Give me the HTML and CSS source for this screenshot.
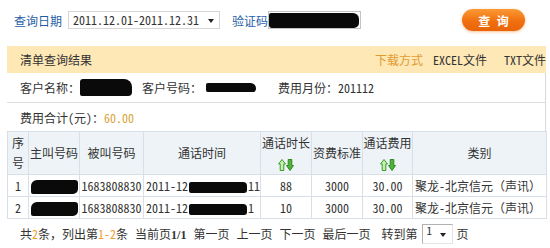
FILE: index.html
```html
<!DOCTYPE html>
<html>
    <head>
        <meta charset="utf-8">
        <link rel="stylesheet" href="styles.css">
    </head>
    <body>
        <div class="search">
            <span class="label">查询日期</span>
            <div class="select date">2011.12.01-2011.12.31<span class="caret"></span></div>
            <span class="label code-label">验证码</span>
            <div class="code"><span class="ink ink-code"></span></div>
            <button class="btn">查 询</button>
        </div>

        <div class="panel">
            <div class="panel-head">
                <span>清单查询结果</span>
                <span class="downloads">
                    <span class="dl-title">下载方式</span>
                    <a class="dl">EXCEL文件</a>
                    <a class="dl dl-txt">TXT文件</a>
                </span>
            </div>

            <div class="line info">
                <span>客户名称：</span><span class="ink ink-name"></span>
                <span class="gap">客户号码：</span><span class="ink ink-num"></span>
                <span class="month">费用月份：201112</span>
            </div>

            <div class="line total">
                费用合计(元)：<span class="money">60.00</span>
            </div>

            <table>
                <colgroup>
                    <col style="width:21px">
                    <col style="width:51px">
                    <col style="width:64px">
                    <col style="width:117px">
                    <col style="width:51px">
                    <col style="width:51px">
                    <col style="width:50px">
                    <col style="width:134px">
                </colgroup>
                <tr>
                    <th>序<br>号</th>
                    <th>主叫号码</th>
                    <th>被叫号码</th>
                    <th>通话时间</th>
                    <th>通话时长<br><svg class="sort" width="16" height="12" viewBox="0 0 16 12"><polygon points="4,0.5 7.5,5 5.8,5 5.8,11.5 2.2,11.5 2.2,5 0.5,5" fill="#c6eeb0" stroke="#3a9a2a"/><polygon points="10.2,0.5 13.8,0.5 13.8,6.5 15.5,6.5 12,11.5 8.5,6.5 10.2,6.5" fill="#4fb23a" stroke="#2f8a22"/></svg></th>
                    <th>资费标准</th>
                    <th>通话费用<br><svg class="sort" width="16" height="12" viewBox="0 0 16 12"><polygon points="4,0.5 7.5,5 5.8,5 5.8,11.5 2.2,11.5 2.2,5 0.5,5" fill="#c6eeb0" stroke="#3a9a2a"/><polygon points="10.2,0.5 13.8,0.5 13.8,6.5 15.5,6.5 12,11.5 8.5,6.5 10.2,6.5" fill="#4fb23a" stroke="#2f8a22"/></svg></th>
                    <th>类别</th>
                </tr>
                <tr>
                    <td>1</td>
                    <td><span class="ink ink-cell"></span></td>
                    <td>1683808830</td>
                    <td class="left">2011-12<span class="ink ink-time"></span>11</td>
                    <td>88</td>
                    <td>3000</td>
                    <td>30.00</td>
                    <td class="left">聚龙-北京信元（声讯）</td>
                </tr>
                <tr>
                    <td>2</td>
                    <td><span class="ink ink-cell"></span></td>
                    <td>1683808830</td>
                    <td class="left">2011-12<span class="ink ink-time"></span>1</td>
                    <td>10</td>
                    <td>3000</td>
                    <td>30.00</td>
                    <td class="left">聚龙-北京信元（声讯）</td>
                </tr>
            </table>

            <div class="pager">
                <span>共<span class="hl">2</span>条，列出第<span class="hl">1-2</span>条</span>
                <span>当前页<b>1/1</b></span>
                <a>第一页</a>
                <a>上一页</a>
                <a>下一页</a>
                <a>最后一页</a>
                <span class="jump-label">转到第</span>
                <div class="jump"><span class="jump-num">1</span><span class="caret"></span></div>
                <span>页</span>
            </div>
        </div>
    </body>
</html>
```

FILE: styles.css
```css
body {
    margin: 0;
    font-family: "Noto Sans Mono CJK SC", "Noto Sans CJK SC", sans-serif;
    font-size: 12px;
    color: #333;
    background: #fff;
}

.search {
    display: flex;
    align-items: center;
    height: 40px;
    padding-left: 14px;
    margin-bottom: 6px;
}

.label {
    color: #1f5ea6;
}

.select {
    position: relative;
    box-sizing: border-box;
    height: 18px;
    border: 1px solid #d6d6d6;
    line-height: 16px;
}

.date {
    width: 152px;
    margin-left: 6px;
    padding-left: 4px;
}

.caret {
    position: absolute;
    right: 5px;
    top: 7px;
    border-left: 3px solid transparent;
    border-right: 3px solid transparent;
    border-top: 4px solid #222;
}

.code-label {
    margin-left: 12px;
}

.code {
    box-sizing: border-box;
    width: 93px;
    height: 18px;
    border: 1px solid #c4c4c4;
    display: flex;
    align-items: center;
}

.ink {
    display: inline-block;
    background: #0a0a0a;
    vertical-align: middle;
}

.ink-code {
    width: 90px;
    height: 15px;
    border-radius: 2px 6px 5px 3px;
}

.btn {
    margin-left: auto;
    margin-right: 25px;
    width: 63px;
    height: 22px;
    border: none;
    border-radius: 11px;
    background: linear-gradient(#fb9a35, #f0700f 55%, #e8640a);
    box-shadow: 0 1px 3px rgba(240, 130, 40, 0.5);
    color: #fff;
    font-family: "Noto Sans CJK SC", sans-serif;
    font-size: 12px;
    font-weight: bold;
    word-spacing: 4px;
    padding: 0;
}

.panel {
    width: 539px;
    margin-left: 7px;
}

.panel-head {
    display: flex;
    align-items: center;
    justify-content: space-between;
    height: 27px;
    padding-left: 13px;
    background: #fde8b6;
}

.dl-title {
    color: #e29a30;
}

.dl {
    margin-left: 4px;
    color: #333;
}

.dl-txt {
    margin-left: 11px;
}

.line {
    display: flex;
    align-items: center;
    padding-left: 13px;
    border-right: 1px solid #d8d8d8;
}

.info {
    height: 29px;
    border-bottom: 1px solid #dcdcdc;
}

.ink-name {
    width: 52px;
    height: 17px;
    border-radius: 3px 8px 4px 2px;
}

.ink-num {
    width: 50px;
    height: 9px;
    margin-left: 4px;
    border-radius: 2px 6px 4px 2px;
}

.gap {
    margin-left: 10px;
}

.month {
    margin-left: 22px;
}

.total {
    height: 28px;
}

.money {
    color: #d9a43a;
}

table {
    width: 539px;
    border-collapse: collapse;
    table-layout: fixed;
    border: 1px solid #d8dfe6;
}

th,
td {
    border: 1px solid #d8dfe6;
    padding: 0;
    text-align: center;
    white-space: nowrap;
    overflow: hidden;
}

th {
    height: 42px;
    background: #eef3f8;
    font-family: "Noto Sans CJK SC", sans-serif;
    font-weight: normal;
    font-size: 12px;
    line-height: 20px;
    color: #333;
}

td {
    height: 21px;
}

td.left {
    text-align: left;
    padding-left: 2px;
}

.sort {
    vertical-align: middle;
}

.ink-cell {
    width: 47px;
    height: 14px;
    border-radius: 6px 3px 5px 2px;
}

.ink-time {
    width: 58px;
    height: 11px;
    margin: 0 1px;
    border-radius: 2px 4px 3px 2px;
}

.pager {
    display: flex;
    align-items: center;
    gap: 7px;
    height: 29px;
    padding-left: 13px;
    padding-bottom: 2px;
}

.pager b {
    font-family: "Liberation Serif", serif;
    font-size: 12px;
}

.hl {
    color: #f0a030;
}

.jump-label {
    margin-left: 4px;
}

.jump {
    position: relative;
    box-sizing: border-box;
    width: 31px;
    height: 20px;
    margin-left: -3px;
    margin-right: -3px;
    border: 1px solid #cfcfcf;
    border-color: #b0b0b0 #e4e4e4 #e4e4e4 #b0b0b0;
}

.jump-num {
    position: absolute;
    left: 4px;
    top: -3px;
    font-size: 11px;
}

.jump .caret {
    right: 6px;
    top: 8px;
}
```
